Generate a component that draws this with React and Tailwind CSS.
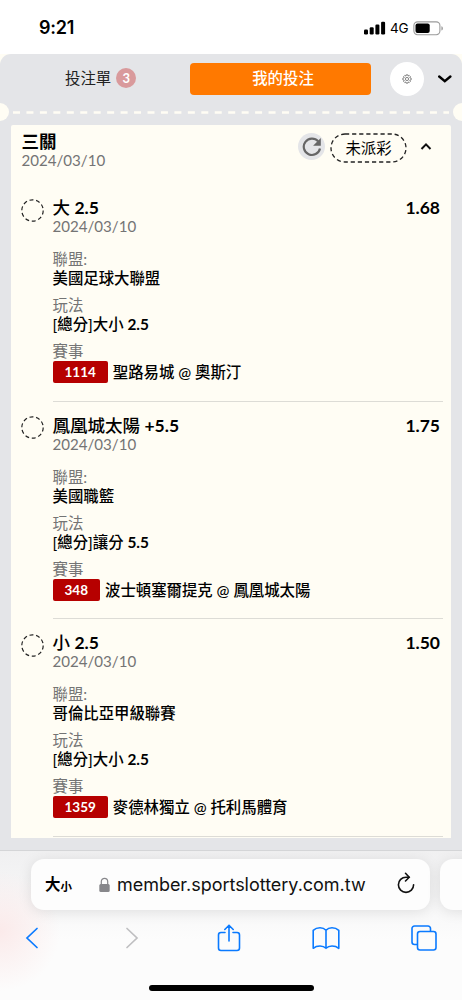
import { useState } from "react";

const bets = [
  {
    id: "1114",
    pick: "大",
    line: "2.5",
    odds: "1.68",
    date: "2024/03/10",
    league: "美國足球大聯盟",
    play: "[總分]大小",
    total: "2.5",
    match: "聖路易城 @ 奧斯汀",
  },
  {
    id: "348",
    pick: "鳳凰城太陽",
    line: "+5.5",
    odds: "1.75",
    date: "2024/03/10",
    league: "美國職籃",
    play: "[總分]讓分",
    total: "5.5",
    match: "波士頓塞爾提克 @ 鳳凰城太陽",
  },
  {
    id: "1359",
    pick: "小",
    line: "2.5",
    odds: "1.50",
    date: "2024/03/10",
    league: "哥倫比亞甲級聯賽",
    play: "[總分]大小",
    total: "2.5",
    match: "麥德林獨立 @ 托利馬體育",
  },
];

function StatusBar() {
  return (
    <div className="h-[54px] shrink-0 flex items-start justify-between pl-[39px] pr-[18px] pt-[18px] font-['Inter']">
      <span className="text-[18px] leading-5 font-semibold tracking-[-0.2px]">9:21</span>
      <div className="flex items-center h-5">
        <svg width="22" height="14" viewBox="0 0 22 14">
          <rect x="0" y="8.5" width="4" height="5" rx="1.2" />
          <rect x="5.7" y="6.3" width="4" height="7.2" rx="1.2" />
          <rect x="11.4" y="3.6" width="4" height="9.9" rx="1.2" />
          <rect x="17.1" y="0.8" width="4" height="12.7" rx="1.2" />
        </svg>
        <span className="text-[13.5px] leading-5 ml-[4px] w-[19px] tracking-[-0.2px]">4G</span>
        <svg className="ml-[4px]" width="31" height="15" viewBox="0 0 31 15">
          <rect x="0.9" y="0.9" width="26" height="12.8" rx="3.6" fill="none" stroke="#9b9b9b" strokeWidth="1.1" />
          <rect x="2.5" y="2.5" width="14.2" height="9.6" rx="2" />
          <path d="M28.4 5.2v4.4c1-.4 1.5-1.2 1.5-2.2s-.5-1.8-1.5-2.2z" fill="#9b9b9b" />
        </svg>
      </div>
    </div>
  );
}

function GearIcon() {
  return (
    <svg width="10" height="10" viewBox="0 0 24 24" fill="none" stroke="#666" strokeWidth="1.9">
      <path d="M10 2h4l.7 3 2.6-1.6 2.9 2.9L18.6 9l3.4 1v4l-3.4 1 1.6 2.7-2.9 2.9-2.6-1.6L14 22h-4l-.7-3-2.6 1.6-2.9-2.9L5.4 15 2 14v-4l3.4-1-1.6-2.7 2.9-2.9L9.3 5z" />
      <circle cx="12" cy="12" r="3.8" />
    </svg>
  );
}

function Tabs() {
  return (
    <div className="flex items-center h-[49px]">
      <button className="w-[190px] pl-[65px] flex items-center text-[15.4px] text-[#222]">
        投注單
        <span className="ml-[5px] size-5 rounded-full bg-[#d99a9c] text-white text-[13px] leading-5 font-bold">3</span>
      </button>
      <button className="w-[181px] h-8 pl-[5px] rounded-[4px] bg-[#ff7900] text-white text-[15.4px] font-medium">
        我的投注
      </button>
      <button className="ml-[19px] size-[34px] rounded-full bg-white flex items-center justify-center">
        <GearIcon />
      </button>
      <svg className="ml-[14px] mt-px" width="14" height="10" viewBox="0 0 14 10" fill="none" stroke="#000" strokeWidth="2.4">
        <path d="M1.2 2.5l5.6 4.6 5.6-4.6" strokeLinecap="round" />
      </svg>
    </div>
  );
}

function Perforation() {
  return (
    <div className="flex items-center justify-between h-[18px] -mx-[9px]">
      <span className="size-[18px] rounded-full bg-[#fffdf4]" />
      <svg className="flex-1 ml-1" height="4" fill="none">
        <line x1="0" y1="2.5" x2="436" y2="2.5" stroke="#fffdf4" strokeWidth="2.4" strokeDasharray="7 6.45" />
      </svg>
      <span className="size-[18px] rounded-full bg-[#fffdf4]" />
    </div>
  );
}

function TicketHeader({ open, onToggle }) {
  return (
    <div className="flex h-[59px] pl-[10.5px] pt-[7px]">
      <div className="flex-1">
        <h2 className="text-[17.5px] leading-5 font-bold">三關</h2>
        <p className="text-[15.1px] leading-4 text-[#747474]">2024/03/10</p>
      </div>
      <span className="size-[27px] mt-px rounded-full bg-[#e4e5e8] flex items-center justify-center">
        <svg width="20" height="20" viewBox="0 0 20 20" fill="none">
          <path d="M16.2 4.4A8.2 8.2 0 1 0 18 11.5" stroke="#666" strokeWidth="2.2" />
          <path d="M18.8 1v7.7h-7.7z" fill="#666" />
        </svg>
      </span>
      <div className="relative ml-[5px] mt-[1px] pt-[2px] w-[77px] h-[30px] flex items-center justify-center text-[15.4px]">
        <svg className="absolute inset-0" width="77" height="30" fill="none">
          <rect x="1" y="1" width="75" height="28" rx="14" stroke="#222" strokeWidth="1.3" strokeDasharray="4.2 2.9" />
        </svg>
        未派彩
      </div>
      <button onClick={onToggle} className="ml-[13px] mr-[19px] mt-[8px] h-3">
        <svg className={open ? "" : "rotate-180"} width="12" height="9" viewBox="0 0 12 9" fill="none" stroke="#111" strokeWidth="2">
          <path d="M1.5 7l4.5-4.6L10.5 7" />
        </svg>
      </button>
    </div>
  );
}

function BetItem({ bet }) {
  return (
    <div className="flex h-[217.5px] pl-[10px] pr-2">
      <svg className="mt-[14.5px] shrink-0" width="23" height="23" fill="none">
        <circle cx="11.5" cy="11.5" r="10.7" stroke="#222" strokeWidth="1.2" strokeDasharray="4 2.72" />
      </svg>
      <div className="flex-1 ml-[8.5px] pt-3 border-b border-[#dddcd6] text-[15.4px]">
        <div className="flex justify-between pr-[3px] text-[17.5px] leading-[23px] font-medium">
          <span>
            {bet.pick} <span className="font-bold">{bet.line}</span>
          </span>
          <span className="font-bold">{bet.odds}</span>
        </div>
        <p className="text-[15.1px] leading-[14px] text-[#747474]">{bet.date}</p>

        <p className="mt-[17px] leading-[18px] text-[#747474]">聯盟:</p>
        <p className="leading-[21px] font-medium">{bet.league}</p>

        <p className="mt-[7px] leading-[18px] text-[#747474]">玩法</p>
        <p className="leading-[21px] font-medium">
          {bet.play} <span className="font-bold">{bet.total}</span>
        </p>

        <p className="mt-[7px] leading-[18px] text-[#747474]">賽事</p>
        <div className="flex items-center mt-px h-[22px] leading-[22px] font-medium">
          <span className="h-[22px] px-3 rounded-[2px] bg-[#b60000] text-white text-[13.5px] font-bold">{bet.id}</span>
          <span className="ml-[5px] whitespace-nowrap">{bet.match}</span>
        </div>
      </div>
    </div>
  );
}

function BrowserBar() {
  return (
    <div className="h-[150px] shrink-0 border-t border-[#d4d5d7] bg-[radial-gradient(circle_at_0px_80px,#fbeaea_0px,transparent_60px),linear-gradient(#f0f0f1,#fcfcfc_60%)] overflow-hidden">
      <div className="flex gap-[10px] pl-[31px] pt-2">
        <div className="w-[399px] h-[51px] shrink-0 rounded-[13px] bg-[#fdfdfd] shadow-[0_2px_14px_rgba(0,0,0,0.1)] flex items-center pl-[14px]">
          <span className="text-[15.4px] font-bold">大</span>
          <span className="text-[11.5px] font-bold pt-1">小</span>
          <svg className="ml-[27px]" width="11" height="16" viewBox="0 0 11 16" fill="none">
            <path d="M2.3 8V4.5a3.2 3.2 0 0 1 6.4 0V8" stroke="#87878b" strokeWidth="1.2" />
            <rect x="0.3" y="7" width="10.4" height="8" rx="1.5" fill="#87878b" />
          </svg>
          <span className="ml-[7px] w-[249px] whitespace-nowrap font-['Inter'] text-[18px] tracking-[-0.02px] text-[#111]">
            member.sportslottery.com.tw
          </span>
          <svg className="ml-[31px] -mt-[3px]" width="18" height="22" viewBox="0 0 18 22" fill="none" stroke="#111" strokeWidth="1.6">
            <path d="M12 5.2H9A7.6 7.6 0 1 0 16.6 12.8" strokeLinecap="round" />
            <path d="M8.5 1.3l3.7 3.9-3.7 3.8" strokeLinecap="round" />
          </svg>
        </div>
        <div className="w-[60px] h-[51px] shrink-0 rounded-[13px] bg-[#fdfdfd] shadow-[0_2px_14px_rgba(0,0,0,0.1)]" />
      </div>

      <div className="flex items-center h-[55px] pl-[25px] text-[#0a7aff]">
        <svg width="14" height="28" viewBox="0 0 14 28" fill="none" stroke="currentColor" strokeWidth="1.7">
          <path d="M12 4.5L2 14l10 9.5" strokeLinecap="round" />
        </svg>
        <svg className="ml-[86px]" width="14" height="28" viewBox="0 0 14 28" fill="none" stroke="#bfbfc1" strokeWidth="1.7">
          <path d="M2 4.5L12 14 2 23.5" strokeLinecap="round" />
        </svg>
        <svg className="ml-[78px]" width="24" height="28" viewBox="0 0 24 28" fill="none" stroke="currentColor" strokeWidth="1.6">
          <path d="M8 8.5H4A2.5 2.5 0 0 0 1.5 11v13A2.5 2.5 0 0 0 4 26.5h16a2.5 2.5 0 0 0 2.5-2.5V11A2.5 2.5 0 0 0 20 8.5h-4M12 17V1.5M7.8 5.5L12 1.3l4.2 4.2" strokeLinecap="round" />
        </svg>
        <svg className="ml-[71px]" width="28" height="24" viewBox="0 0 28 24" fill="none" stroke="currentColor" strokeWidth="1.6">
          <path d="M14 4.2C12.5 2.6 10.5 1.8 8 1.8c-2.8 0-5 .9-6.8 2.5v18C3 20.8 5.2 20 8 20c2.5 0 4.5.8 6 2.3C15.5 20.8 17.5 20 20 20c2.8 0 5 .8 6.8 2.3v-18C25 2.7 22.8 1.8 20 1.8c-2.5 0-4.5.8-6 2.4zM14 4.2v18" strokeLinejoin="round" />
        </svg>
        <svg className="ml-[71px]" width="26" height="26" viewBox="0 0 26 26" fill="none" stroke="currentColor" strokeWidth="1.6">
          <path d="M6.5 19.5h-3A2.5 2.5 0 0 1 1 17V3.5A2.5 2.5 0 0 1 3.5 1H17a2.5 2.5 0 0 1 2.5 2.5v3" />
          <rect x="6.5" y="6.5" width="18.5" height="18.5" rx="2.5" />
        </svg>
      </div>

      <div className="mx-auto mt-5 w-[165px] h-[6px] rounded-full bg-black" />
    </div>
  );
}

export default function App() {
  const [open, setOpen] = useState(true);

  return (
    <div className="w-[462px] h-[1000px] flex flex-col overflow-hidden bg-white text-black font-['Lato','Noto_Sans_CJK_TC',sans-serif]">
      <StatusBar />

      <div className="h-[796px] shrink-0 bg-[#fffdf4]">
        <div className="h-full rounded-t-[11px] bg-[#e4e5e8] overflow-hidden">
          <Tabs />
          <Perforation />

          <div className="mx-[11px] mt-1 h-[713px] overflow-hidden rounded-t-[2px] bg-[#fffdf4]">
            <TicketHeader open={open} onToggle={() => setOpen(!open)} />
            {open && bets.map((bet) => <BetItem key={bet.id} bet={bet} />)}
          </div>
        </div>
      </div>

      <BrowserBar />
    </div>
  );
}
